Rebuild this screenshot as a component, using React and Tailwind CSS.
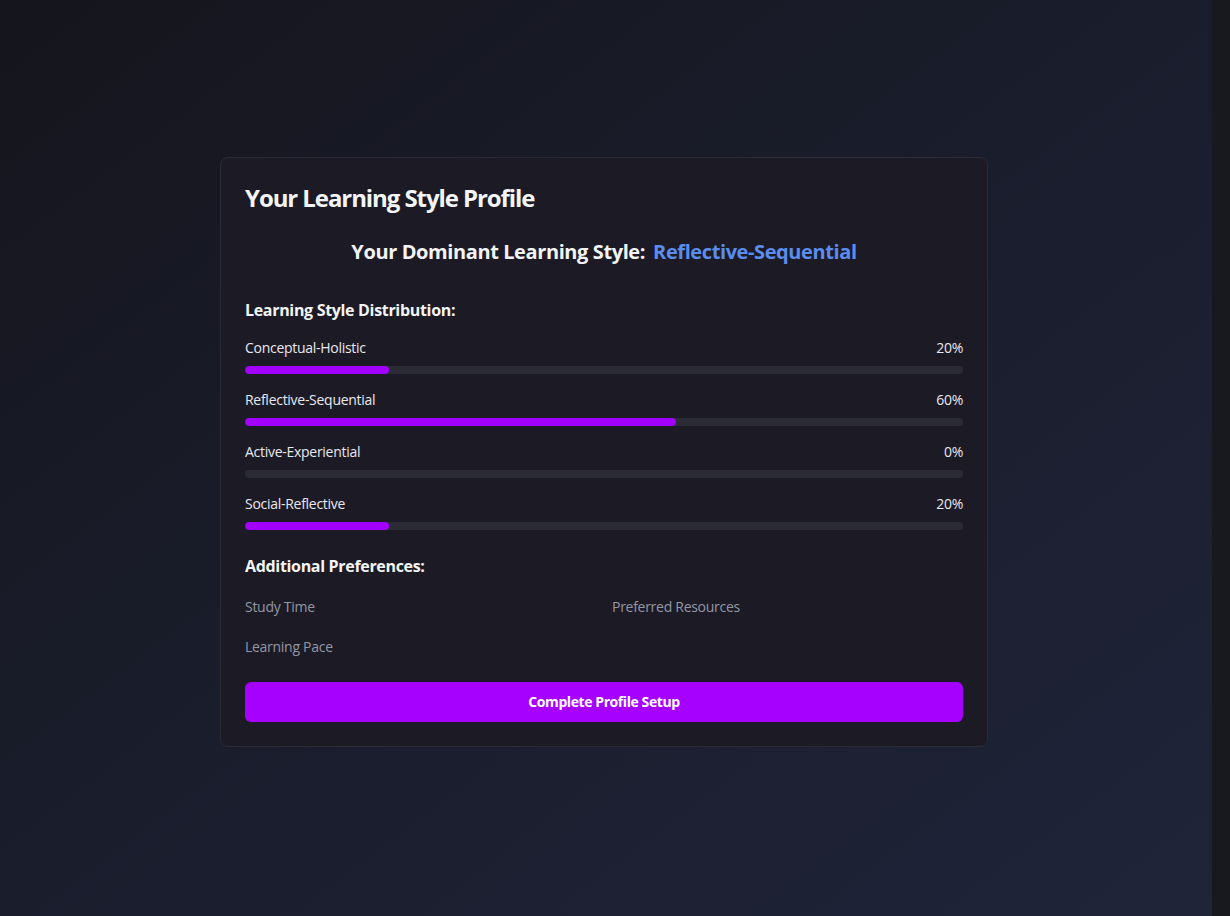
import React from "react";

const styles = [
  { name: "Conceptual-Holistic", value: 20 },
  { name: "Reflective-Sequential", value: 60 },
  { name: "Active-Experiential", value: 0 },
  { name: "Social-Reflective", value: 20 },
];

export default function App() {
  return (
    <div
      className="flex h-[916px] w-full overflow-hidden"
      style={{ fontFamily: "'Open Sans', Lato, sans-serif" }}
    >
      <main className="flex flex-1 justify-center pr-1 pt-[157px] bg-gradient-to-br from-[#15151d] via-[#1a1d2c] to-[#1f2439]">
        <div className="h-fit w-[768px] rounded-lg border border-[#2b2b38] bg-[#1c1b25] p-6 text-[#f3f4f6]">
          <h2 className="text-2xl font-bold leading-8 tracking-[-0.045em] text-[#f5f5f7]">Your Learning Style Profile</h2>

          <div className="mt-6 flex items-center justify-center gap-2 text-xl font-bold leading-7 tracking-[-0.02em]">
            <span className="text-[#f3f4f6]">Your Dominant Learning Style:</span>
            <span className="text-[#5b8def]">Reflective-Sequential</span>
          </div>

          <h3 className="mt-8 text-base font-bold leading-6 tracking-[-0.02em] text-[#f3f4f6]">Learning Style Distribution:</h3>

          <div className="mt-4 flex flex-col gap-4">
            {styles.map((s) => (
              <div key={s.name}>
                <div className="mb-2 flex justify-between text-sm leading-5 tracking-[-0.02em] text-[#e8e8ee]">
                  <span>{s.name}</span>
                  <span>{s.value}%</span>
                </div>
                <div className="h-2 w-full overflow-hidden rounded-full bg-[#2a2b35]">
                  <div className="h-full rounded-full bg-[#a100ff]" style={{ width: `${s.value}%` }} />
                </div>
              </div>
            ))}
          </div>

          <h3 className="mt-6 text-base font-bold leading-6 tracking-[-0.02em] text-[#f3f4f6]">Additional Preferences:</h3>

          <div className="mt-[19px] grid grid-cols-2 gap-x-4 gap-y-5 text-sm leading-5 tracking-[-0.02em] text-[#9496a4]">
            <div>Study Time</div>
            <div>Preferred Resources</div>
            <div>Learning Pace</div>
          </div>

          <button className="mt-[25px] flex h-10 w-full items-center justify-center rounded-md bg-[#a600ff] text-sm font-bold tracking-[-0.03em] text-white">
            Complete Profile Setup
          </button>
        </div>
      </main>
      <div className="w-[18px] shrink-0 bg-[#18181f]" />
    </div>
  );
}
